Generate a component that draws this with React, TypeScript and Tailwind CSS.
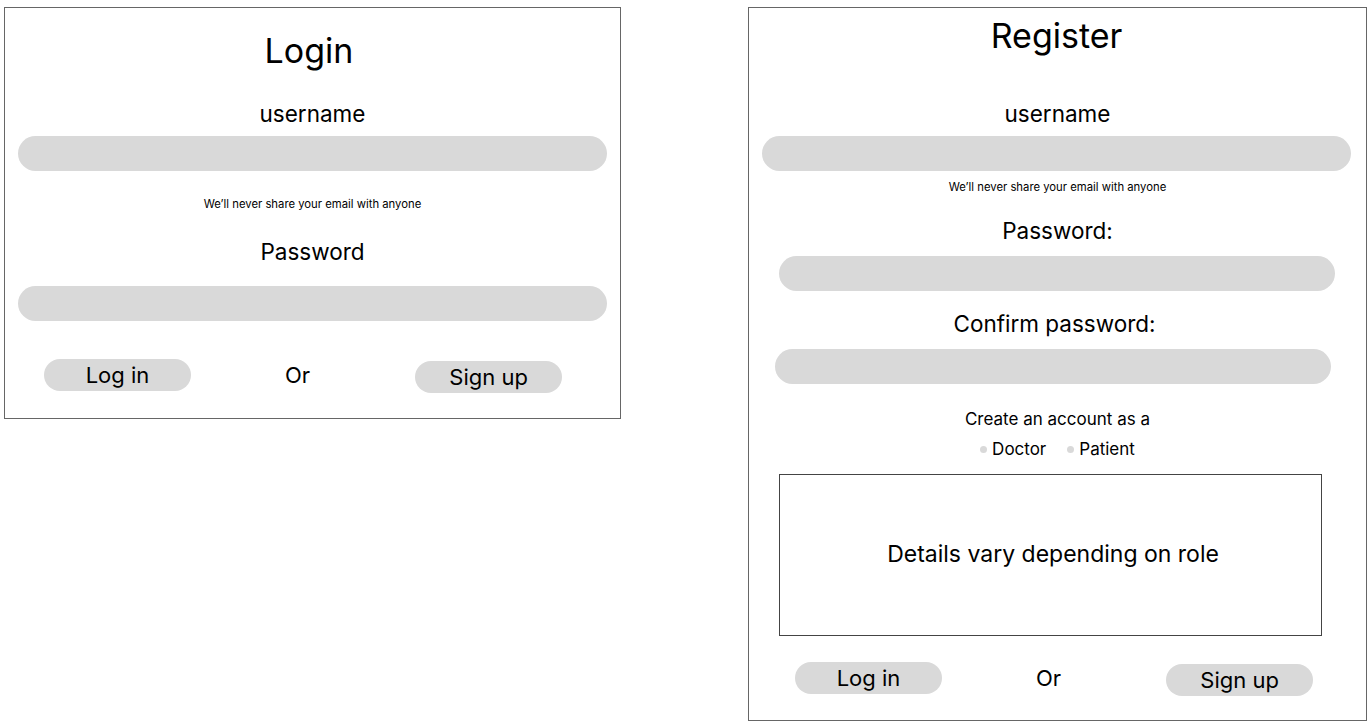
const Field = ({ className }: { className: string }) => (
  <div className={`h-[35px] rounded-full bg-[#d9d9d9] ${className}`} />
);

const Pill = ({ label, className = "" }: { label: string; className?: string }) => (
  <button
    className={`h-[32px] w-[147px] shrink-0 rounded-full bg-[#d9d9d9] text-[22px] leading-[32px] text-black ${className}`}
  >
    {label}
  </button>
);

const LoginCard = () => {
  return (
    <div className="ml-[4px] mt-[7px] h-[412px] w-[617px] shrink-0 border border-[#666] text-center">
      <h1 className="mt-[23px] pr-[7px] text-[34px] leading-[40px]">Login</h1>
      <div className="mt-[29px] text-[22.5px] leading-[28px]">username</div>
      <Field className="ml-[13px] mt-[8px] w-[589px]" />
      <div className="mt-[26px] text-[11.3px] leading-[14px]">
        We’ll never share your email with anyone
      </div>
      <div className="mt-[27px] text-[22.5px] leading-[28px]">Password</div>
      <Field className="ml-[13px] mt-[20px] w-[589px]" />
      <div className="mt-[38px] flex items-start pl-[39px]">
        <Pill label="Log in" />
        <span className="ml-[94px] text-[22px] leading-[32px]">Or</span>
        <Pill label="Sign up" className="ml-[105px] mt-[2px]" />
      </div>
    </div>
  );
};

const RegisterCard = () => {
  return (
    <div className="ml-[127px] mt-[7px] h-[714px] w-[619px] shrink-0 border border-[#666] text-center">
      <h1 className="mt-[8px] pr-[2px] text-[34px] leading-[40px]">Register</h1>
      <div className="mt-[44px] text-[22.5px] leading-[28px]">username</div>
      <Field className="ml-[13px] mt-[8px] w-[589px]" />
      <div className="mt-[9px] text-[11.3px] leading-[14px]">
        We’ll never share your email with anyone
      </div>
      <div className="mt-[23px] text-[22.5px] leading-[28px]">Password:</div>
      <Field className="ml-[30px] mt-[11px] w-[556px]" />
      <div className="mt-[19px] pr-[6px] text-[22.5px] leading-[28px]">Confirm password:</div>
      <Field className="ml-[26px] mt-[11px] w-[556px]" />
      <div className="mt-[24px] text-[17px] leading-[22px]">Create an account as a</div>
      <div className="mt-[8px] flex items-center justify-center text-[17px] leading-[22px]">
        <span className="mr-[5px] h-[7px] w-[7px] rounded-full bg-[#d9d9d9]" />
        <span>Doctor</span>
        <span className="ml-[21px] mr-[5px] h-[7px] w-[7px] rounded-full bg-[#d9d9d9]" />
        <span>Patient</span>
      </div>
      <div className="ml-[30px] mt-[14px] flex h-[162px] w-[543px] items-center justify-center border border-[#444] pb-[2px] pl-[5px] text-[23px]">
        Details vary depending on role
      </div>
      <div className="mt-[26px] flex items-start pl-[46px]">
        <Pill label="Log in" />
        <span className="ml-[94px] text-[22px] leading-[32px]">Or</span>
        <Pill label="Sign up" className="ml-[105px] mt-[2px]" />
      </div>
    </div>
  );
};

export default function App() {
  return (
    <div
      className="flex h-[728px] w-[1371px] items-start bg-white text-black"
      style={{ fontFamily: "Inter, 'Noto Sans', sans-serif" }}
    >
      <LoginCard />
      <RegisterCard />
    </div>
  );
}
